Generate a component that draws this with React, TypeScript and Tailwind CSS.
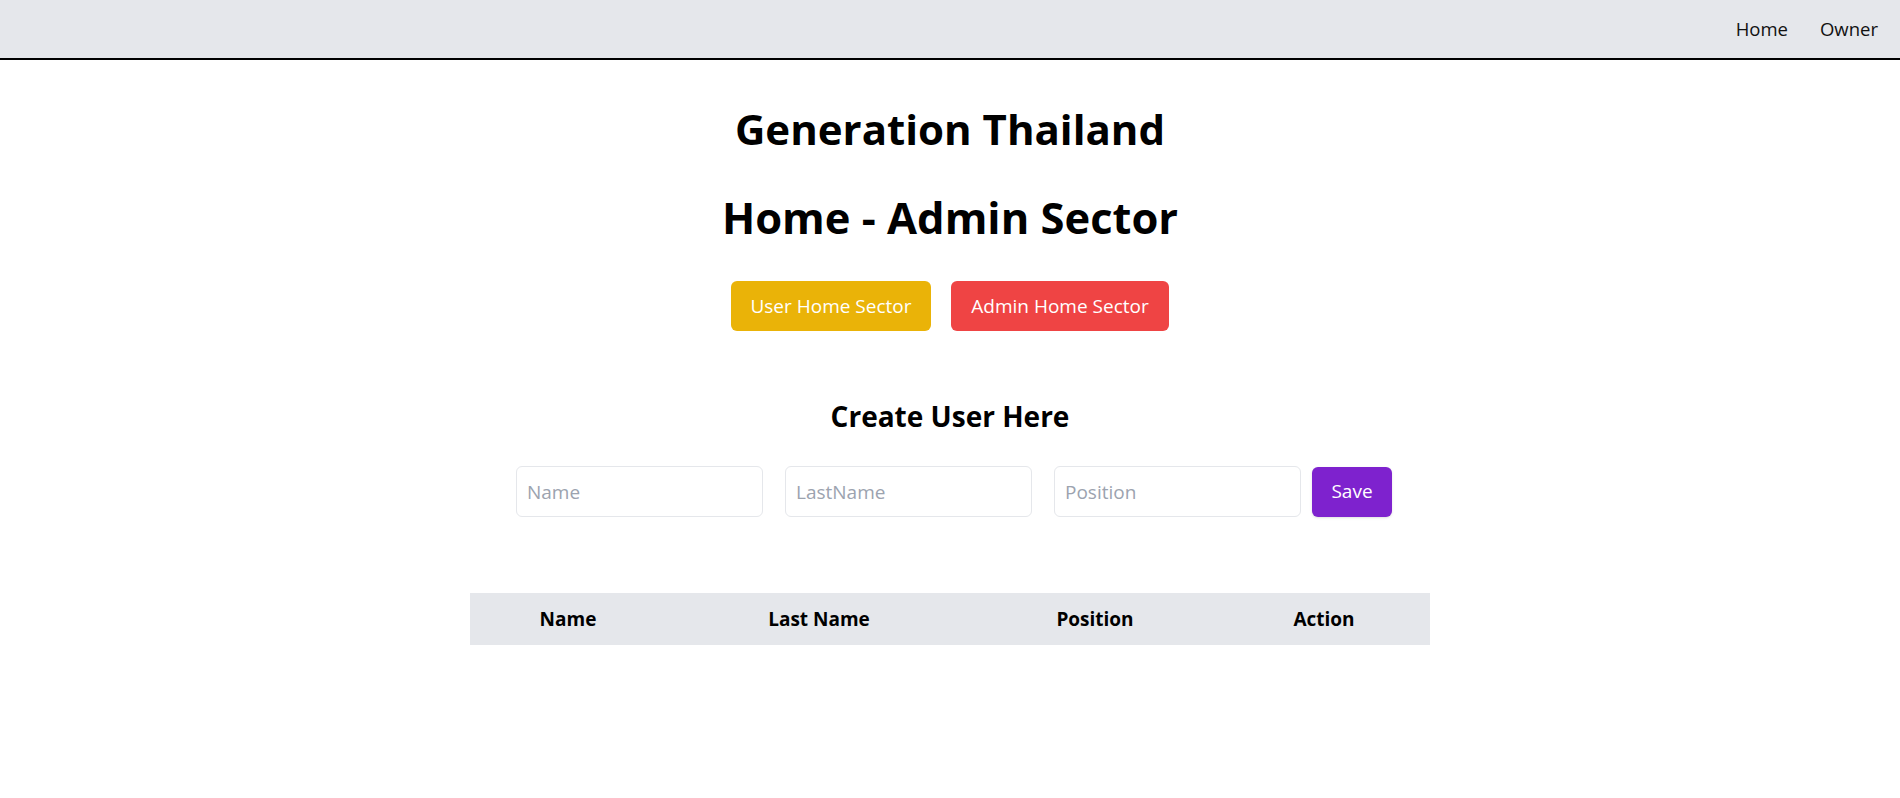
import React from "react";

export default function App() {
  return (
    <div className="min-h-[798px] bg-white text-black font-['Open_Sans','Noto_Sans',sans-serif]">
      <nav className="h-[60px] bg-[#e5e7eb] border-b-2 border-black flex items-center justify-end gap-[32px] pr-[22px] text-[18.5px] text-[#111]">
        <a href="#" className="leading-none">Home</a>
        <a href="#" className="leading-none">Owner</a>
      </nav>
      <main className="flex flex-col items-center">
        <h1 className="mt-[45px] h-[48px] text-[42px] leading-[48px] font-bold">Generation Thailand</h1>
        <h1 className="mt-[41px] h-[48px] text-[43.5px] leading-[48px] font-bold">Home - Admin Sector</h1>
        <div className="mt-[39px] flex gap-[20px]">
          <button className="h-[50px] w-[200px] rounded-md bg-[#eab308] text-white text-[19px]">User Home Sector</button>
          <button className="h-[50px] w-[218px] rounded-md bg-[#ef4444] text-white text-[19px]">Admin Home Sector</button>
        </div>
        <h2 className="mt-[71px] h-[28px] text-[28px] leading-[28px] font-bold">Create User Here</h2>
        <div className="mt-[36px] flex items-center justify-center">
          <input placeholder="Name" className="mx-[11px] w-[247px] h-[51px] rounded-md border border-[#e5e7eb] px-[10px] text-[19px] placeholder:text-[#9ca3af] outline-none" />
          <input placeholder="LastName" className="mx-[11px] w-[247px] h-[51px] rounded-md border border-[#e5e7eb] px-[10px] text-[19px] placeholder:text-[#9ca3af] outline-none" />
          <input placeholder="Position" className="mx-[11px] w-[247px] h-[51px] rounded-md border border-[#e5e7eb] px-[10px] text-[19px] placeholder:text-[#9ca3af] outline-none" />
          <button className="mr-[3px] w-[80px] h-[50px] rounded-md bg-[#7e22ce] text-white text-[19px] shadow-sm">Save</button>
        </div>
        <table className="mt-[76px] w-[960px] table-fixed border-collapse">
          <thead>
            <tr className="h-[52px] bg-[#e5e7eb] text-[19px] font-bold">
              <th className="w-[196px] text-center">Name</th>
              <th className="w-[306px] text-center">Last Name</th>
              <th className="w-[246px] text-center">Position</th>
              <th className="w-[212px] text-center">Action</th>
            </tr>
          </thead>
          <tbody></tbody>
        </table>
      </main>
    </div>
  );
}
